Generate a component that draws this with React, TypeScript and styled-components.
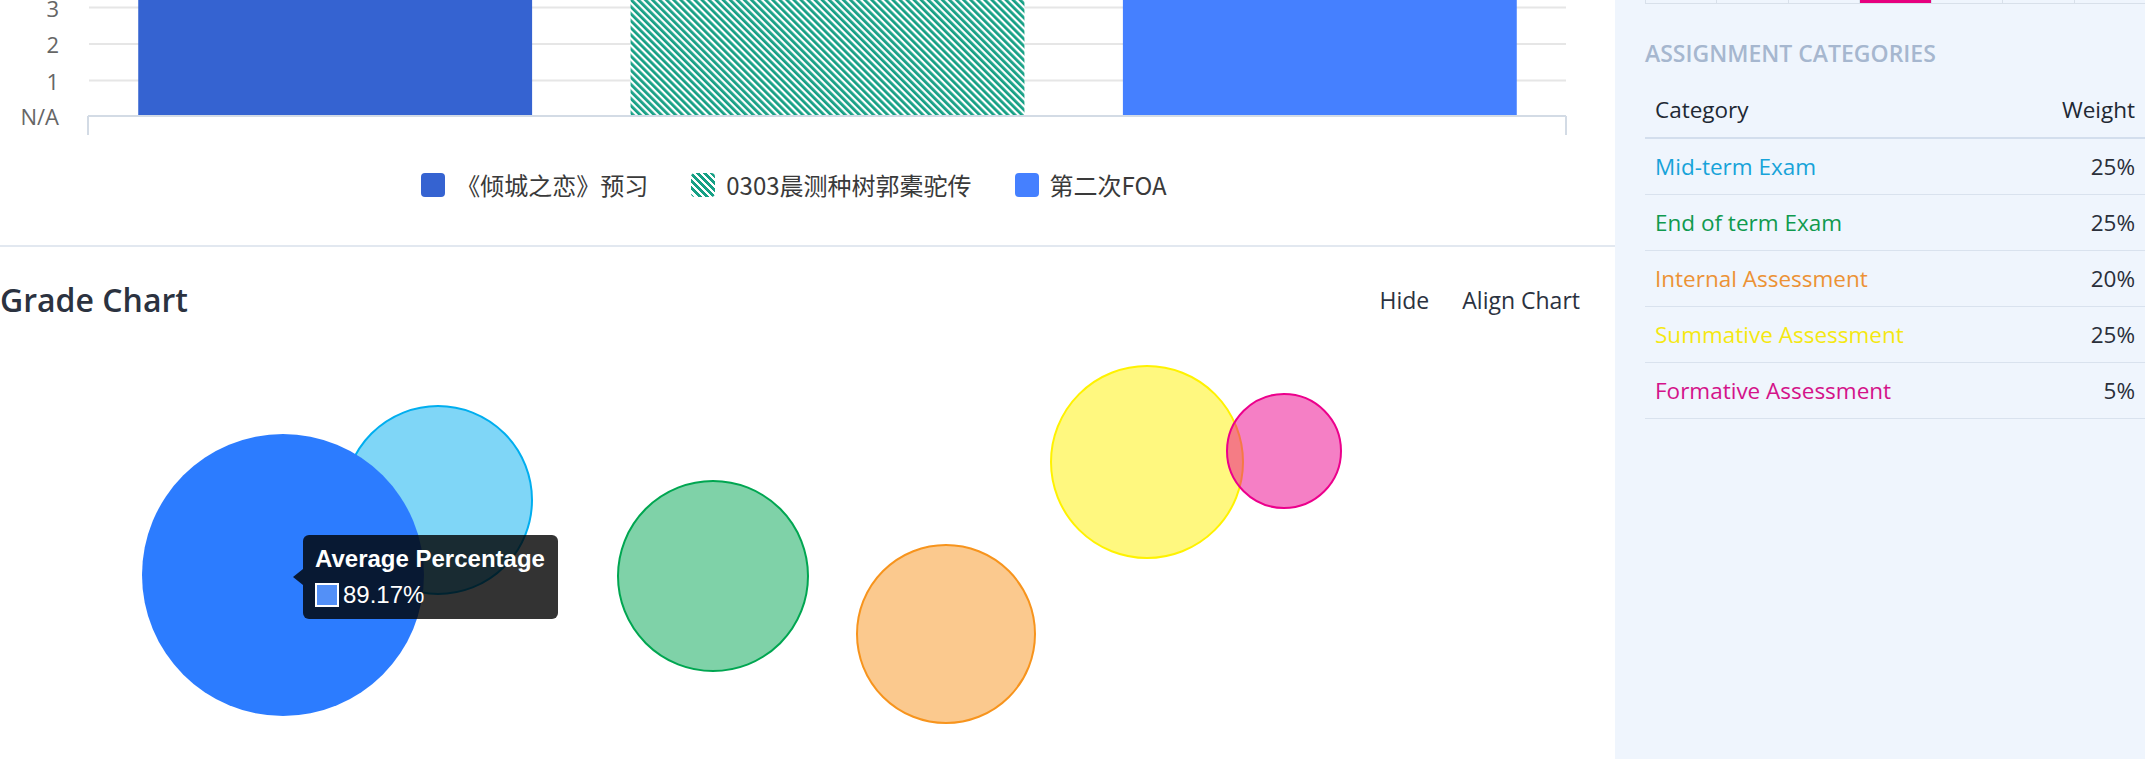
import styled, { createGlobalStyle } from "styled-components";

interface Bar {
  label: string;
  color: string;
  hatch?: boolean;
}

interface Category {
  name: string;
  weight: number;
  text: string;
  base: string;
  x: number;
  y: number;
  r: number;
}

const bars: Bar[] = [
  { label: "《倾城之恋》预习", color: "#3563d1" },
  { label: "0303晨测种树郭橐驼传", color: "#16a085", hatch: true },
  { label: "第二次FOA", color: "#4580ff" },
];

const ticks = [
  { label: "3", y: 7.5 },
  { label: "2", y: 44 },
  { label: "1", y: 80.5 },
  { label: "N/A", y: 116 },
];

const categories: Category[] = [
  { name: "Mid-term Exam", weight: 25, text: "#17a3d9", base: "#00aeef", x: 438, y: 178, r: 94 },
  { name: "End of term Exam", weight: 25, text: "#0f9a4f", base: "#00a651", x: 713, y: 254, r: 95 },
  { name: "Internal Assessment", weight: 20, text: "#ec9235", base: "#f7941d", x: 946, y: 312, r: 89 },
  { name: "Summative Assessment", weight: 25, text: "#f5e812", base: "#fff200", x: 1147, y: 140, r: 96 },
  { name: "Formative Assessment", weight: 5, text: "#d4138a", base: "#ec008c", x: 1284, y: 129, r: 57 },
];

const PLOT_LEFT = 89;
const PLOT_RIGHT = 1566;
const AXIS_Y = 116;
const CAT_W = (PLOT_RIGHT - PLOT_LEFT) / bars.length;

const BarChart = () => (
  <BarSvg width={1615} height={140}>
    <defs>
      <pattern
        id="hatch"
        width={5}
        height={5}
        patternUnits="userSpaceOnUse"
        patternTransform="rotate(-45)"
      >
        <rect width={5} height={5} fill="#fff" />
        <rect width={2.8} height={5} fill="#16a085" />
      </pattern>
    </defs>
    {ticks.slice(0, 3).map((t) => (
      <line
        key={t.label}
        x1={PLOT_LEFT}
        x2={PLOT_RIGHT}
        y1={t.y}
        y2={t.y}
        stroke="#e6e6e6"
        strokeWidth={2}
      />
    ))}
    {bars.map((b, i) => (
      <rect
        key={b.label}
        x={PLOT_LEFT + i * CAT_W + CAT_W * 0.1}
        y={-20}
        width={CAT_W * 0.8}
        height={AXIS_Y - 1 + 20}
        fill={b.hatch ? "url(#hatch)" : b.color}
      />
    ))}
    <line x1={PLOT_LEFT - 1} x2={PLOT_RIGHT} y1={AXIS_Y} y2={AXIS_Y} stroke="#d3dbe5" strokeWidth={2} />
    <line x1={PLOT_LEFT - 1} x2={PLOT_LEFT - 1} y1={AXIS_Y} y2={135} stroke="#d3dbe5" strokeWidth={2} />
    <line x1={PLOT_RIGHT} x2={PLOT_RIGHT} y1={AXIS_Y} y2={135} stroke="#d3dbe5" strokeWidth={2} />
    {ticks.map((t) => (
      <TickLabel key={t.label} x={59} y={t.y} textAnchor="end" dominantBaseline="central">
        {t.label}
      </TickLabel>
    ))}
  </BarSvg>
);

const BubbleChart = () => (
  <BubbleSvg width={1615} height={437}>
    {categories.map((c) => (
      <circle
        key={c.name}
        cx={c.x}
        cy={c.y}
        r={c.r}
        fill={c.base}
        fillOpacity={0.5}
        stroke={c.base}
        strokeWidth={2}
      />
    ))}
    <circle cx={283} cy={253} r={141} fill="#2c7cff" />
  </BubbleSvg>
);

const App = () => {
  return (
    <>
      <GlobalStyle />
      <Page>
        <Main>
          <TopCard>
            <BarChart />
            <Legend>
              {bars.map((b) => (
                <LegendItem key={b.label}>
                  <Swatch $color={b.color} $hatch={b.hatch} />
                  {b.label}
                </LegendItem>
              ))}
            </Legend>
          </TopCard>
          <GradeSection>
            <SectionHeader>
              <Title>Grade Chart</Title>
              <Actions>
                <ActionButton>Hide</ActionButton>
                <ActionButton>Align Chart</ActionButton>
              </Actions>
            </SectionHeader>
            <ChartArea>
              <BubbleChart />
              <Tooltip>
                <TooltipTitle>Average Percentage</TooltipTitle>
                <TooltipBody>
                  <KeyBox />
                  89.17%
                </TooltipBody>
              </Tooltip>
            </ChartArea>
          </GradeSection>
        </Main>
        <Sidebar>
          <TabStrip>
            {Array.from({ length: 7 }).map((_, i) => (
              <Tab key={i} $active={i === 3} />
            ))}
          </TabStrip>
          <SideHeading>Assignment Categories</SideHeading>
          <Table>
            <thead>
              <tr>
                <HeadCell>Category</HeadCell>
                <HeadCell $right>Weight</HeadCell>
              </tr>
            </thead>
            <tbody>
              {categories.map((c) => (
                <tr key={c.name}>
                  <Cell $color={c.text}>{c.name}</Cell>
                  <Cell $right>{c.weight}%</Cell>
                </tr>
              ))}
            </tbody>
          </Table>
        </Sidebar>
      </Page>
    </>
  );
};

const GlobalStyle = createGlobalStyle`
  html, body {
    margin: 0;
    padding: 0;
    background: #fff;
  }
  body {
    font-family: "Open Sans", "Noto Sans", sans-serif;
    overflow: hidden;
  }
  *, *::before, *::after {
    box-sizing: border-box;
  }
`;

const Page = styled.div`
  display: flex;
  width: 2145px;
  height: 759px;
  overflow: hidden;
`;
const Main = styled.main`
  flex: none;
  width: 1615px;
  display: flex;
  flex-direction: column;
`;
const TopCard = styled.section`
  flex: none;
  height: 247px;
  border-bottom: 2px solid #e2e8f0;
  display: flex;
  flex-direction: column;
`;
const BarSvg = styled.svg`
  display: block;
  flex: none;
`;
const TickLabel = styled.text`
  font-family: "Open Sans", sans-serif;
  font-size: 22px;
  fill: #666;
`;
const Legend = styled.ul`
  list-style: none;
  margin: 33px 0 0;
  padding: 0 27px 0 0;
  display: flex;
  justify-content: center;
  gap: 43px;
  font-family: "Noto Sans CJK SC", sans-serif;
  font-size: 24px;
  line-height: 24px;
  color: #3a3a3a;
`;
const LegendItem = styled.li`
  display: flex;
  align-items: center;
  gap: 11px;
`;
const Swatch = styled.span<{ $color: string; $hatch?: boolean }>`
  width: 24px;
  height: 24px;
  border-radius: 4px;
  background: ${(p) =>
    p.$hatch
      ? `repeating-linear-gradient(45deg, ${p.$color} 0 2.8px, #fff 2.8px 5px)`
      : p.$color};
`;
const GradeSection = styled.section`
  flex: 1;
  min-height: 0;
  display: flex;
  flex-direction: column;
  padding-top: 30px;
`;
const SectionHeader = styled.header`
  flex: none;
  height: 45px;
  display: flex;
  align-items: center;
  justify-content: space-between;
  padding-right: 35px;
`;
const Title = styled.h2`
  margin: 0;
  font-size: 32px;
  font-weight: 600;
  line-height: 45px;
  color: #2b3240;
`;
const Actions = styled.div`
  display: flex;
  gap: 33px;
`;
const ActionButton = styled.button`
  border: 0;
  background: none;
  padding: 0;
  font-family: inherit;
  font-size: 23px;
  line-height: 34px;
  color: #2b3240;
  cursor: pointer;
`;
const ChartArea = styled.div`
  position: relative;
  flex: 1;
`;
const BubbleSvg = styled.svg`
  display: block;
`;
const Tooltip = styled.div`
  position: absolute;
  left: 303px;
  top: 213px;
  width: 255px;
  padding: 12px;
  border-radius: 6px;
  background: rgba(0, 0, 0, 0.8);
  color: #fff;
  font-family: "Liberation Sans", Arial, sans-serif;
  font-size: 24px;
  line-height: 24px;
  white-space: nowrap;

  &::before {
    content: "";
    position: absolute;
    left: -10px;
    top: 50%;
    transform: translateY(-50%);
    border-top: 8px solid transparent;
    border-bottom: 8px solid transparent;
    border-right: 10px solid rgba(0, 0, 0, 0.8);
  }
`;
const TooltipTitle = styled.div`
  font-weight: 700;
  margin-bottom: 12px;
`;
const TooltipBody = styled.div`
  display: flex;
  align-items: center;
  gap: 4px;
`;
const KeyBox = styled.span`
  width: 24px;
  height: 24px;
  border: 2px solid #fff;
  background: #5390f7;
`;
const Sidebar = styled.aside`
  flex: 1;
  background: #eff5fd;
  padding-left: 30px;
`;
const TabStrip = styled.div`
  display: grid;
  grid-template-columns: repeat(7, 1fr);
  height: 4px;
  border-bottom: 1px solid #d8e0ea;
`;
const Tab = styled.div<{ $active?: boolean }>`
  border-left: 1px solid #d8e0ea;
  background: ${(p) => (p.$active ? "#e6007e" : "transparent")};
  background-clip: padding-box;
`;
const SideHeading = styled.h3`
  margin: 33px 0 0;
  font-size: 23px;
  font-weight: 600;
  line-height: 32px;
  color: #a6b7cf;
  text-transform: uppercase;
`;
const Table = styled.table`
  width: 100%;
  margin-top: 14px;
  border-collapse: collapse;
  font-size: 22.5px;
`;
const HeadCell = styled.th<{ $right?: boolean }>`
  padding: 10px;
  line-height: 34px;
  font-weight: 400;
  text-align: ${(p) => (p.$right ? "right" : "left")};
  color: #212833;
  border-bottom: 2px solid #d3deed;
`;
const Cell = styled.td<{ $right?: boolean; $color?: string }>`
  padding: 10px;
  line-height: 35px;
  text-align: ${(p) => (p.$right ? "right" : "left")};
  color: ${(p) => p.$color ?? "#2a2f3a"};
  border-bottom: 1px solid #d9e2ee;
`;

export default App;
